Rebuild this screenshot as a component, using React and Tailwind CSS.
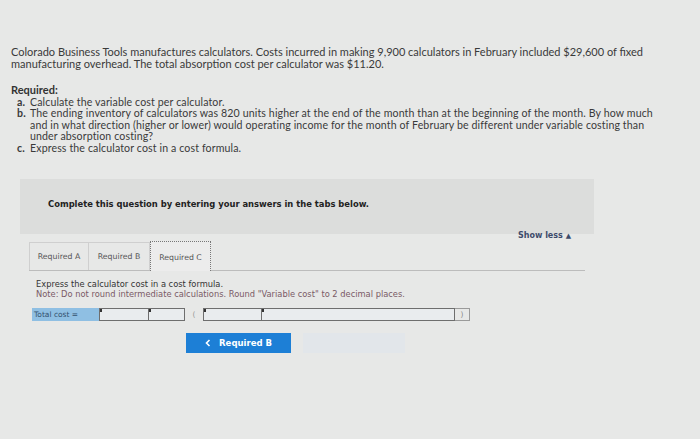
import React from "react";

function Box({ w, cls = "" }) {
  return (
    <div className={`relative border border-[#6e6e6e] bg-[#e9ecee] ${cls}`} style={{ width: w }}>
      <span className="absolute left-0 top-0 w-[2px] h-[3px] bg-[#333]"></span>
    </div>
  );
}

export default function App() {
  const sans = { fontFamily: "Lato, 'Open Sans', sans-serif" };
  const verd = { fontFamily: "'DejaVu Sans', Verdana, sans-serif" };
  return (
    <div className="w-[700px] h-[439px] bg-[#e7e8e7] text-[#3a3a3a] overflow-hidden relative">
      <div className="pt-[46px] pl-[11px] text-[11px] leading-[12px] whitespace-nowrap" style={sans}>
        <p>
          Colorado Business Tools manufactures calculators. Costs incurred in making 9,900 calculators in February included $29,600 of fixed
          <br />
          manufacturing overhead. The total absorption cost per calculator was $11.20.
        </p>
        <p className="mt-[14px] font-bold text-[#333]">Required:</p>
        <div className="ml-[6px] mt-[1px] text-[10.6px] leading-[11.4px] tracking-[0.12px]">
          <div className="flex"><span className="w-[13px] font-bold">a.</span><span>Calculate the variable cost per calculator.</span></div>
          <div className="flex">
            <span className="w-[13px] shrink-0 font-bold">b.</span>
            <span>
              The ending inventory of calculators was 820 units higher at the end of the month than at the beginning of the month. By how much
              <br />
              and in what direction (higher or lower) would operating income for the month of February be different under variable costing than
              <br />
              under absorption costing?
            </span>
          </div>
          <div className="flex"><span className="w-[13px] font-bold">c.</span><span>Express the calculator cost in a cost formula.</span></div>
        </div>
      </div>

      <div className="ml-[20px] mt-[25px] w-[574px] h-[55px] bg-[#dcdddc] pl-[28px] pt-[19px]">
        <p className="text-[8.4px] font-bold text-[#222]" style={verd}>
          Complete this question by entering your answers in the tabs below.
        </p>
      </div>
      <div className="absolute left-[518px] top-[230px] text-[8px] font-bold text-[#3d4b6b] flex items-center gap-[3px]" style={verd}>
        Show less <span className="text-[7px]">▲</span>
      </div>

      <div className="ml-[29px] mt-[8px] w-[556px] flex border-b border-[#bcbcbc] text-[7.8px] text-[#555]" style={verd}>
        <div className="w-[60px] h-[28px] border border-[#cfcfcf] border-b-0 flex items-center justify-center">Required A</div>
        <div className="w-[61px] h-[28px] border border-[#cfcfcf] border-b-0 border-l-0 flex items-center justify-center">Required B</div>
        <div className="w-[61px] h-[30px] -mt-[1px] -mb-[1px] border border-dotted border-[#777] border-b-0 bg-[#ececec] flex items-center justify-center pt-[3px]">Required C</div>
      </div>

      <div className="ml-[36px] mt-[8px] text-[8.3px] leading-[10px]" style={verd}>
        <p className="text-[#333]">Express the calculator cost in a cost formula.</p>
        <p className="text-[#7a5a66]">Note: Do not round intermediate calculations. Round "Variable cost" to 2 decimal places.</p>
      </div>

      <div className="ml-[32px] mt-[9px] flex items-stretch h-[13px] text-[7.5px]" style={verd}>
        <div className="w-[67px] bg-[#8fbfe3] text-[#33516e] pl-[2px] flex items-center">Total cost =</div>
        <Box w={50} />
        <Box w={36} cls="border-l-0" />
        <div className="w-[18px] flex items-center justify-center text-[#999]">(</div>
        <Box w={59} />
        <Box w={193} cls="border-l-0" />
        <div className="w-[15px] border border-[#9a9a9a] border-l-0 flex items-center justify-center text-[#888]">)</div>
      </div>

      <div className="ml-[186px] mt-[12px] flex gap-[12px]">
        <div className="w-[105px] h-[20px] bg-[#1d7fd6] text-white text-[8.5px] font-bold flex items-center justify-center gap-[8px]" style={verd}>
          <svg width="6" height="8" viewBox="0 0 6 8" fill="none" stroke="white" strokeWidth="1.6">
            <path d="M4.5 1 L1.5 4 L4.5 7" />
          </svg>
          Required B
        </div>
        <div className="w-[102px] h-[20px] bg-[#e2e6ea]"></div>
      </div>
    </div>
  );
}
